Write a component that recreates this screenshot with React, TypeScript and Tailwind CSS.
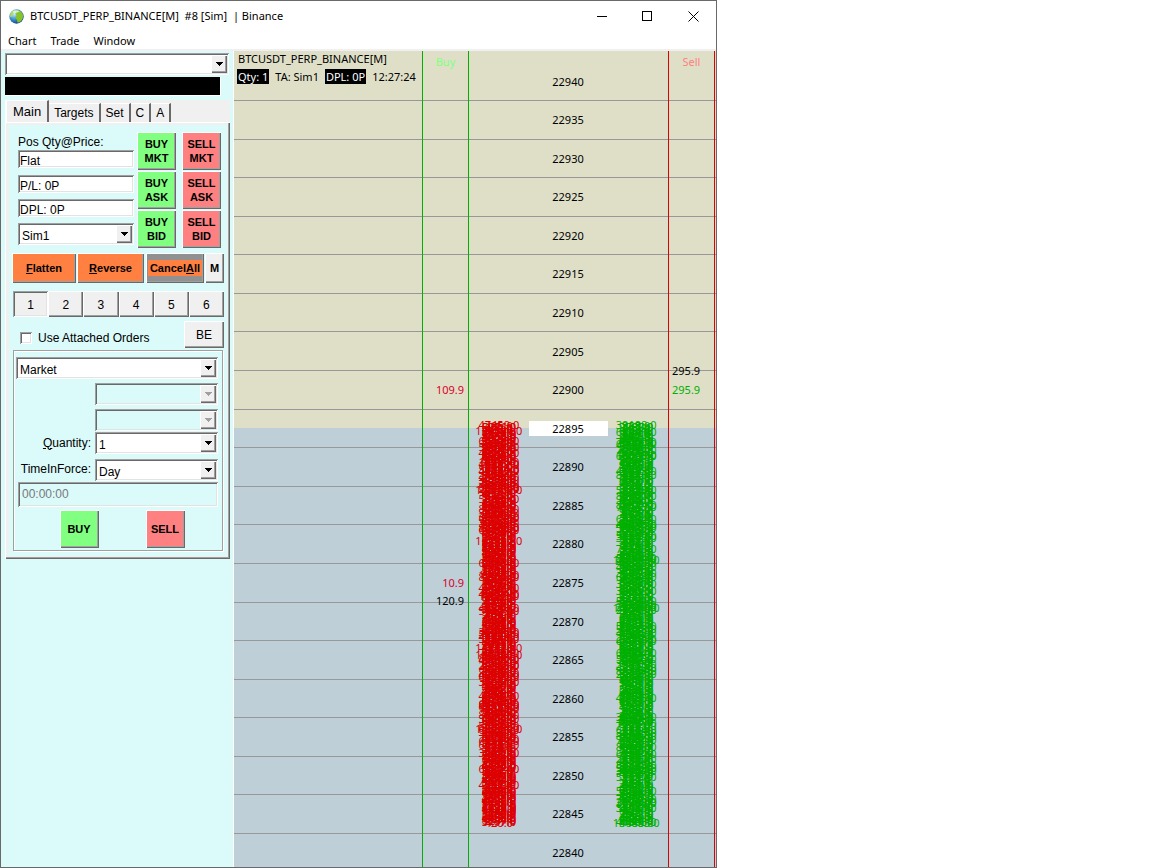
import type { ReactNode } from 'react';
import clsx from 'clsx';

const raised =
  'shadow-[inset_1px_1px_0_#ffffff,inset_-1px_-1px_0_#696969,inset_-2px_-2px_0_#a0a0a0]';
const sunken =
  'shadow-[inset_1px_1px_0_#a0a0a0,inset_-1px_-1px_0_#ffffff,inset_2px_2px_0_#696969,inset_-2px_-2px_0_#e3e3e3]';

const prices = Array.from({ length: 21 }, (_, i) => 22940 - i * 5);
const LAST_PRICE = 22895;

// resting sizes that pile up on top of each other near the market
const makeSizes = (seed: number) => {
  let s = seed;
  const next = () => {
    s = (s * 16807) % 2147483647;
    return s / 2147483647;
  };
  return Array.from({ length: 480 }, () => {
    const pick = next();
    const n = Math.floor(next() * 8999);
    if (pick > 0.993) return `${100000 + n * 6}.0`;
    if (pick > 0.87) return `${11000 + n * 9}.0`;
    if (pick > 0.4) return `${1000 + n}.0`;
    return `${100 + Math.floor(n / 10)}.0`;
  });
};

const bidSizes = ['47459.0', ...makeSizes(71)];
const askSizes = ['39198.0', ...makeSizes(1234), '156495.0'];

const Arrow = ({ disabled }: { disabled?: boolean }) => (
  <span className={clsx('absolute top-0.5 bottom-0.5 right-0.5 w-4 flex items-center justify-center bg-[#f0f0f0] pointer-events-none', raised)}>
    <svg width="7" height="4" viewBox="0 0 7 4" shapeRendering="crispEdges">
      <path d="M0 0h7v1H0zM1 1h5v1H1zM2 2h3v1H2zM3 3h1v1H3z" fill={disabled ? '#a0a0a0' : '#000'} />
    </svg>
  </span>
);

type ComboProps = {
  id: string;
  label?: string;
  value?: string;
  disabled?: boolean;
  className?: string;
};

const Combo = ({ id, label, value = '', disabled, className }: ComboProps) => (
  <div className={clsx('relative h-[22px]', sunken, disabled ? 'bg-[#dbfafa]' : 'bg-white', className)}>
    <select
      id={id}
      aria-label={label}
      disabled={disabled}
      className="block w-full h-full pt-[3px] pl-1 pr-5 bg-transparent appearance-none outline-none"
    >
      <option>{value}</option>
    </select>
    <Arrow disabled={disabled} />
  </div>
);

const Field = ({ id, label, value }: { id: string; label: string; value: string }) => (
  <input
    id={id}
    aria-label={label}
    defaultValue={value}
    className={clsx('block w-full h-[18px] pl-0.5 pt-[3px] bg-white outline-none', sunken)}
  />
);

const OrderButton = ({ side, children }: { side: 'buy' | 'sell'; children: ReactNode }) => (
  <button
    className={clsx(
      'w-[39px] h-[38px] text-[11px] leading-[14px] font-bold',
      raised,
      side === 'buy' ? 'bg-[#80ff80]' : 'bg-[#ff8080]',
    )}
  >
    {children}
  </button>
);

const Tab = ({ active, children }: { active?: boolean; children: ReactNode }) => (
  <button
    role="tab"
    aria-selected={!!active}
    className={clsx(
      'border-t border-t-white border-r-2 border-r-[#696969]',
      active ? 'h-[22px] px-1.5 text-[13px] border-l-2 border-l-white' : 'h-[19px] px-[5px]',
    )}
  >
    {children}
  </button>
);

const TitleBar = () => (
  <header className="flex items-center h-[30px] pl-2">
    <svg width="15" height="15" viewBox="0 0 15 15">
      <defs>
        <radialGradient id="globe" cx="35%" cy="30%" r="75%">
          <stop offset="0" stopColor="#d6f1ff" />
          <stop offset="0.45" stopColor="#4aa2e0" />
          <stop offset="1" stopColor="#0b3c78" />
        </radialGradient>
      </defs>
      <circle cx="7.5" cy="7.5" r="7.2" fill="url(#globe)" />
      <path d="M7 2.500C9 .8 12 1.800 13.500 4.500c1 2.500.6 5-1 7-1.500 1.700-3 2.300-4 2L8 10.800 6.200 8.500 7.600 6.200 6.500 4.600z" fill="#86c428" />
      <path d="M1.500 4.500C2.600 2.500 4.500 1.300 6 1.200L5.200 3.400 4 5.200 3.600 7.500 1.200 8z" fill="#b4dc5a" />
      <path d="M4 2.200C6 .8 9 .8 10.800 2.200 9 3.800 6 4.200 3.600 3.800z" fill="#f4fbd8" opacity="0.75" />
    </svg>
    <h1 className="pl-1.5 whitespace-pre">BTCUSDT_PERP_BINANCE[M]  #8 [Sim]  | Binance</h1>
    <div className="flex h-full ml-auto">
      <button aria-label="Minimize" className="flex items-center justify-center w-[46px]">
        <svg width="11" height="11" viewBox="0 0 11 11" shapeRendering="crispEdges">
          <path d="M0 5h10v1H0z" />
        </svg>
      </button>
      <button aria-label="Maximize" className="flex items-center justify-center w-[45px]">
        <svg width="11" height="11" viewBox="0 0 11 11" shapeRendering="crispEdges">
          <path d="M.5.5h9v9h-9z" fill="none" stroke="#000" />
        </svg>
      </button>
      <button aria-label="Close" className="flex items-center justify-center w-[46px]">
        <svg width="11" height="11" viewBox="0 0 11 11">
          <path d="M.5.5l10 10M10.500.5l-10 10" fill="none" stroke="#000" />
        </svg>
      </button>
    </div>
  </header>
);

const MainTab = () => (
  <div className="bg-[#dbfafa] pt-[7px] pb-[5px] px-[3px]">
    <div className="flex justify-between pr-[3px] pl-1.5">
      <div className="w-[116px] pt-0.5">
        <label htmlFor="position" className="block h-4 leading-4">Pos Qty@Price:</label>
        <Field id="position" label="Pos Qty@Price" value="Flat" />
        <div className="pt-[7px]"><Field id="pl" label="P/L" value="P/L: 0P" /></div>
        <div className="pt-1.5"><Field id="dpl" label="DPL" value="DPL: 0P" /></div>
        <Combo id="account" label="Trade account" value="Sim1" className="mt-1.5" />
      </div>
      <div className="grid grid-cols-2 gap-x-1.5 gap-y-px">
        <OrderButton side="buy">BUY<br />MKT</OrderButton>
        <OrderButton side="sell">SELL<br />MKT</OrderButton>
        <OrderButton side="buy">BUY<br />ASK</OrderButton>
        <OrderButton side="sell">SELL<br />ASK</OrderButton>
        <OrderButton side="buy">BUY<br />BID</OrderButton>
        <OrderButton side="sell">SELL<br />BID</OrderButton>
      </div>
    </div>

    <div className="flex gap-px h-[30px] mt-[5px] text-[11px] font-bold">
      <button className={clsx('w-16 bg-[#ff8040]', raised)}><u>F</u>latten</button>
      <button className={clsx('w-[67px] bg-[#ff8040]', raised)}><u>R</u>everse</button>
      <button className={clsx('w-[58px] ml-px bg-[#919191]', raised)}>
        <span className="block mx-0.5 bg-[#ff8040] whitespace-nowrap">Cancel<u>A</u>ll</span>
      </button>
      <button className={clsx('flex-1 bg-[#f0f0f0]', raised)}>M</button>
    </div>

    <div className="grid grid-cols-6 mt-2 h-[26px] pl-px">
      {[1, 2, 3, 4, 5, 6].map((n) => (
        <button key={n} className={clsx('pt-px bg-[#f0f0f0]', n === 1 ? sunken : raised)}>{n}</button>
      ))}
    </div>

    <div className="flex items-start justify-between pl-2 mt-1">
      <label className="flex items-center gap-1.5 pt-2 h-[26px]">
        <input type="checkbox" className={clsx('w-3 h-3 appearance-none bg-white', sunken)} />
        Use Attached Orders
      </label>
      <button className={clsx('w-10 h-[27px] bg-[#f0f0f0]', raised)}>BE</button>
    </div>

    <div className="pt-1.5 pb-0.5 px-1 mt-0.5 ml-px mr-px border border-[#a0a0a0] shadow-[inset_1px_1px_0_#ffffff,1px_1px_0_#ffffff]">
      <Combo id="type" label="Order type" value="Market" className="-ml-0.5" />
      <div className="grid grid-cols-[73px_1fr] items-center gap-x-1 pt-1">
        <Combo id="price1" label="Limit price" disabled className="col-start-2" />
        <Combo id="price2" label="Stop price" disabled className="col-start-2 mt-1" />
        <label htmlFor="qty" className="text-right whitespace-nowrap"><u>Q</u>uantity:</label>
        <Combo id="qty" value="1" className="mt-px" />
        <label htmlFor="tif" className="pt-0.5 text-right whitespace-nowrap">TimeInForce:</label>
        <Combo id="tif" value="Day" className="mt-[5px]" />
      </div>
      <input
        aria-label="Good till time"
        disabled
        defaultValue="00:00:00"
        className={clsx('block w-full h-[25px] pl-1 pb-0.5 mt-px bg-[#dbfafa] text-[#787878]', sunken)}
      />
      <div className="flex justify-center gap-[47px] pt-[3px] pl-2">
        <OrderButton side="buy">BUY</OrderButton>
        <OrderButton side="sell">SELL</OrderButton>
      </div>
    </div>
  </div>
);

const TradePanel = () => (
  <aside className="w-[233px] shrink-0 pl-1 pt-0.5 bg-[#dbfafa] border-r border-white font-['Liberation_Sans',Arial,sans-serif] text-[12px]">
    <Combo id="config" label="Trade configuration" className="mr-1" />
    <div className="h-[19px] mt-0.5 mr-3 bg-black border-r border-b border-white"></div>
    <div className="mt-1 mr-[3px]">
      <div role="tablist" className="flex items-end h-[22px] bg-[#f0f0f0]">
        <Tab active>Main</Tab>
        <Tab>Targets</Tab>
        <Tab>Set</Tab>
        <Tab>C</Tab>
        <Tab>A</Tab>
      </div>
      <div className="py-[3px] pr-[3px] pl-1 bg-[#f0f0f0] shadow-[inset_1px_1px_0_#ffffff,inset_-1px_-1px_0_#696969,inset_-2px_-2px_0_#a0a0a0]">
        <MainTab />
      </div>
    </div>
  </aside>
);

const Sizes = ({ values, className }: { values: string[]; className: string }) => (
  <div className={clsx('absolute top-[374px] bottom-10 flex flex-col justify-between items-center w-12 -translate-x-1/2', className)}>
    {values.map((v, i) => (
      <span key={i} className="h-0 leading-0">{v}</span>
    ))}
  </div>
);

const Ladder = () => (
  <main className="relative flex flex-col flex-1 min-w-0">
    {prices.map((price, i) => (
      <div
        key={price}
        className={clsx(
          'relative grid grid-cols-[188fr_46fr_200fr_47fr_1fr] items-center',
          i === 0 && 'h-[50px] pt-3.5 border-b border-[#989898]',
          i === 20 && 'h-[33px] pt-1.5',
          i > 0 && i < 20 && 'flex-1 border-b border-[#989898] pt-px',
          price > LAST_PRICE && 'bg-[#dfdfc8]',
          price === LAST_PRICE && 'bg-linear-to-b from-[#dfdfc8] from-50% to-[#becfd8] to-50%',
          price < LAST_PRICE && 'bg-[#becfd8]',
          price === 22875 && 'z-10',
        )}
      >
        <div className="relative col-start-2 pr-1 text-right text-[#dc0028]">
          {price === 22900 && '109.9'}
          {price === 22875 && '10.9'}
          {price === 22875 && <span className="absolute right-1 top-[18px] text-black">120.9</span>}
        </div>
        <div className="col-start-3 text-center">
          <span className={clsx('inline-block w-[79px] leading-[15px]', price === LAST_PRICE && 'bg-white')}>
            {price}
          </span>
        </div>
        <div className="relative col-start-4 pl-1 text-[#00b000]">
          {price === 22900 && '295.9'}
          {price === 22900 && <span className="absolute left-1 -top-[19px] text-black">295.9</span>}
        </div>
      </div>
    ))}

    <div className="absolute inset-0 z-20 grid grid-cols-[188fr_46fr_200fr_47fr_1fr] pointer-events-none">
      <div className="pl-1 whitespace-nowrap">
        <p className="leading-[15px]">BTCUSDT_PERP_BINANCE[M]</p>
        <p className="flex gap-1.5 leading-[15px] pt-[3px]">
          <span className="-ml-px px-px text-white bg-black">Qty: 1</span>
          <span>TA: Sim1</span>
          <span className="px-px text-white bg-black">DPL: 0P</span>
          <span>12:27:24</span>
        </p>
      </div>
      <div className="pt-[3px] text-center text-[#80ff80] border-l border-l-[#00b000]">Buy</div>
      <div className="relative border-l border-l-[#00b000]">
        <Sizes values={bidSizes} className="left-[15%] text-[#dd0000]" />
        <Sizes values={askSizes} className="left-[84%] text-[#00b000]" />
      </div>
      <div className="pt-[3px] text-center text-[#ff8080] border-l border-r border-l-[#dd0000] border-r-[#dd0000]">Sell</div>
    </div>
  </main>
);

export default function App() {
  return (
    <div className="grid grid-cols-[717fr_435fr] min-h-screen bg-white text-black">
      <div className="flex flex-col border border-[#696969] bg-white font-['Noto_Sans',sans-serif] text-[11px]">
        <TitleBar />
        <nav className="flex gap-3.5 h-5 pl-[7px] pt-0.5 border-b-2 border-[#f0f0f0]">
          <button>Chart</button>
          <button>Trade</button>
          <button>Window</button>
        </nav>
        <div className="flex flex-1">
          <TradePanel />
          <Ladder />
        </div>
      </div>
    </div>
  );
}
